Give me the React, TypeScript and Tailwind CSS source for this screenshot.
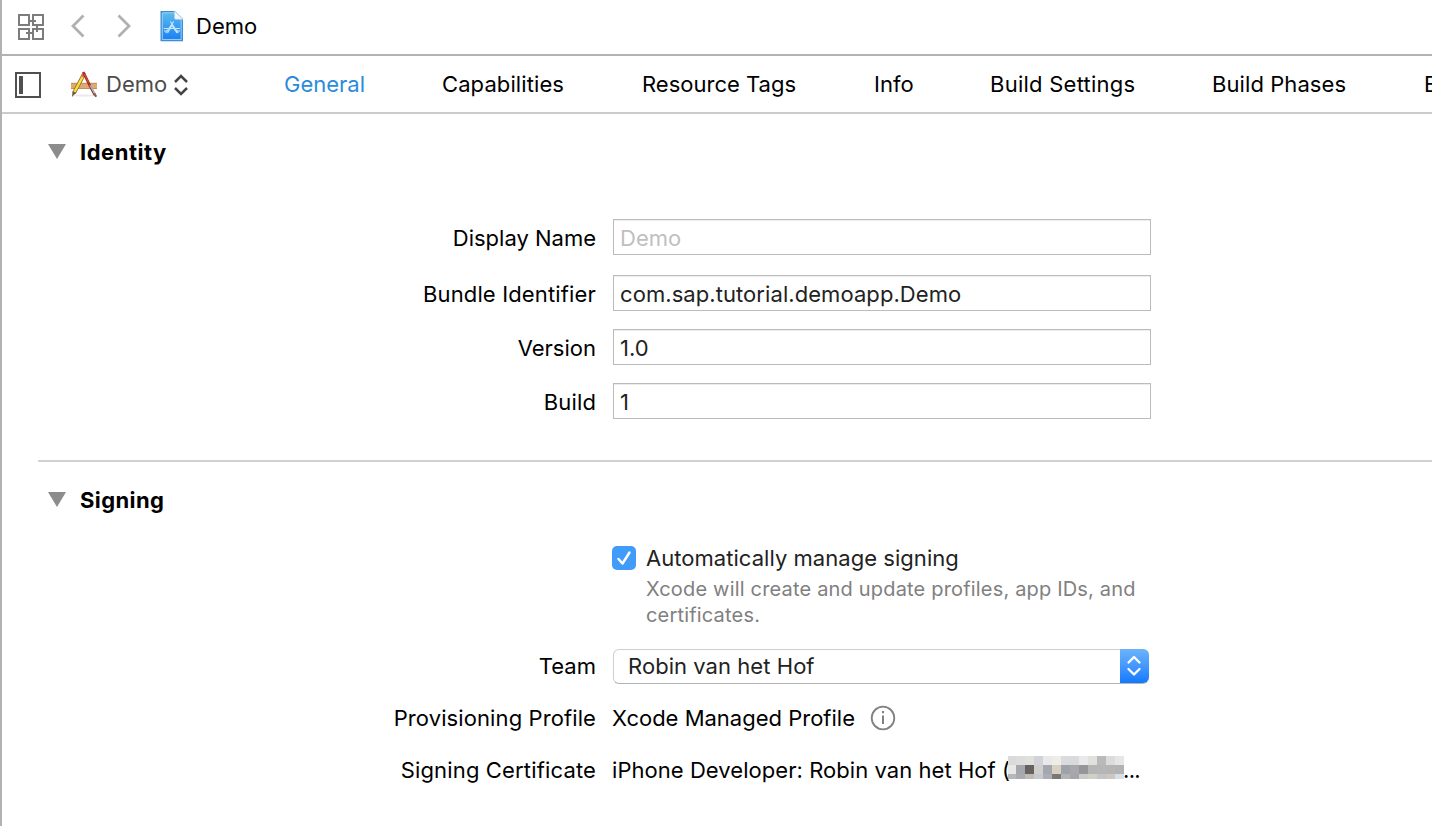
import type { ReactNode } from "react";

const MOSAIC = [
  ["#dadada", "#dcdddc", "#e0e0dd", "#d2d3d8", "#e9e9e9", "#eeede8", "#dadbdd", "#d9dadc", "#e9e9e9", "#e0e0dc", "#bababd", "#dcdcdc", "#e6e6e6"],
  ["#e8e8e7", "#a4a7ae", "#67625f", "#d0cfcc", "#a4a7ae", "#d8d0c3", "#9fa2ab", "#a6a8ac", "#969698", "#b5b5b5", "#b6b6b6", "#b5b5b5", "#b3b3b4"],
  ["#b7b7b5", "#a8abaf", "#bfbab6", "#c6cacd", "#acaeb4", "#7b7774", "#b3b3b1", "#a5a6aa", "#cacaca", "#d0cfc8", "#c4c4c7", "#cdc7c1", "#d8dfe6"],
];

function GridIcon() {
  return (
    <svg className="shrink-0" width="26" height="26" viewBox="0 0 26 26" fill="none" stroke="#7c7c7c" strokeWidth="2">
      <rect x="1" y="1" width="10" height="10" />
      <rect x="15" y="1" width="10" height="10" />
      <rect x="1" y="15" width="10" height="10" />
      <rect x="15" y="15" width="10" height="10" />
      <path d="M12 7h6M8 19h6M19 12v6" />
    </svg>
  );
}

function Chevron({ d }: { d: string }) {
  return (
    <svg width="14" height="24" viewBox="0 0 14 24" fill="none" stroke="#b0b0b0" strokeWidth="2.8">
      <path d={d} />
    </svg>
  );
}

function ProjectIcon() {
  return (
    <svg width="24" height="32" viewBox="0 0 24 32">
      <defs>
        <linearGradient id="doc" x1="0" y1="0" x2="0" y2="1">
          <stop offset="0" stopColor="#5bbcec" />
          <stop offset="1" stopColor="#1b80f6" />
        </linearGradient>
      </defs>
      <path d="M.5 1h14.500l8 8v22.300H.5z" fill="#3a8fd0" />
      <path d="M2.300 2.800h12.200l6.700 6.700v20H2.300z" fill="url(#doc)" stroke="#b5dcf8" strokeWidth=".8" />
      <path d="M14.500 1l8.500 8.300h-7q-1.500 0-1.500-1.500z" fill="#f2f6f9" stroke="#b9d2e4" strokeWidth=".6" />
      <path d="M3.800 18.500h4.200M9.500 18.500h5M16 18.500h4M4 21h3M17 21h3" stroke="#c9e8ff" strokeWidth="1" fill="none" />
      <path d="M10.300 11.500l8 11.500M13.700 11.500l-8 11.500M12 15.500l5 7.500M12 15.500L7.500 23" stroke="#c9e8ff" strokeWidth="1.100" fill="none" />
    </svg>
  );
}

function AppIcon() {
  return (
    <svg width="28" height="28" viewBox="0 0 28 28">
      <ellipse cx="14" cy="25.500" rx="11" ry="1.200" fill="#ebebeb" />
      <path d="M1 13h26v6H1z" fill="#e0a875" />
      <path d="M1 13.300h26M1 18.500h26" stroke="#c68c5c" strokeWidth="1" />
      <path d="M13.500 5L4 23" stroke="#8c6a26" strokeWidth="3.800" />
      <path d="M12.800 6.500L4.500 22" stroke="#f9e13d" strokeWidth="2.400" />
      <path d="M14.300 3l-2 4" stroke="#e8626a" strokeWidth="3.200" />
      <path d="M5.800 23L2 27l.5-5.500z" fill="#6b5a48" />
      <path d="M13.300 2l6.700 14" stroke="#a83420" strokeWidth="2.800" />
      <path d="M14.500 4l4 8.500" stroke="#d4583c" strokeWidth=".8" />
      <path d="M20 15.500l5 9.500" stroke="#b0a9a8" strokeWidth="2.600" />
      <path d="M19.200 16l5 9.500" stroke="#7d3a30" strokeWidth="1" />
      <path d="M24.300 23.500l1.900 3.300" stroke="#8a5a50" strokeWidth="2.200" />
    </svg>
  );
}

function Triangle() {
  return (
    <svg className="-mt-[2px]" width="18" height="15" viewBox="0 0 18 15">
      <path d="M0 0h18L9 15z" fill="#8c8c8c" />
    </svg>
  );
}

function Section({ title, children }: { title: ReactNode; children: ReactNode }) {
  return (
    <section className="flex flex-col">
      <div className="flex h-8 items-center gap-[14px] pl-[46px]">
        <Triangle />
        {title}
      </div>
      {children}
    </section>
  );
}

function Row({ label, children }: { label: ReactNode; children: ReactNode }) {
  return (
    <div className="flex h-9 items-center">
      <div className="flex w-[594px] justify-end pt-[2px]">{label}</div>
      <div className="flex pl-[17px]">{children}</div>
    </div>
  );
}

function Field({ children }: { children: ReactNode }) {
  return (
    <div className="flex h-9 w-[538px] items-center border border-[#bcbcbc] pt-[2px] pl-[6px] text-[#222] shadow-[inset_0_1px_0_#ededed]">
      {children}
    </div>
  );
}

export default function App() {
  return (
    <div className="h-[826px] w-[1432px] overflow-hidden border-l-2 border-[#b2b2b2] bg-white font-['Inter',sans-serif] text-[22px] leading-[26px] whitespace-nowrap text-black">
      <header className="flex h-14 items-center border-b-2 border-[#b2b2b2] pl-4">
        <GridIcon />
        <div className="-mt-[2px] ml-[27px] flex">
          <Chevron d="M12.500 1.500L2 12l10.500 10.500" />
        </div>
        <div className="-mt-[2px] ml-[32px] flex">
          <Chevron d="M1.500 1.500L12 12 1.500 22.500" />
        </div>
        <div className="-mt-[2px] ml-[29px] flex">
          <ProjectIcon />
        </div>
        <span className="-mt-[2px] ml-[12px]">Demo</span>
      </header>

      <nav className="flex h-[58px] items-center border-b-2 border-[#cbcbcb] pl-[13px]">
        <svg className="mt-px shrink-0" width="26" height="26" viewBox="0 0 26 26">
          <rect x="1" y="1" width="24" height="24" fill="none" stroke="#505050" strokeWidth="2" />
          <path d="M4 4h4v18H4z" fill="#505050" />
        </svg>
        <div className="ml-[29px] flex shrink-0">
          <AppIcon />
        </div>
        <div className="flex w-[186px] shrink-0 items-center pl-[8px] text-[#4c4c4c]">
          <span>Demo</span>
          <svg className="mt-[2px] ml-[7px]" width="14" height="22" viewBox="0 0 14 22" fill="none" stroke="#444" strokeWidth="2.500">
            <path d="M1 8l6-6 6 6M1 14l6 6 6-6" />
          </svg>
        </div>
        <div className="flex w-[158px] shrink-0 text-[#2a8bdc]"><span>General</span></div>
        <div className="flex w-[200px] shrink-0 tracking-[0.1px]"><span>Capabilities</span></div>
        <div className="flex w-[232px] shrink-0"><span>Resource Tags</span></div>
        <div className="flex w-[116px] shrink-0"><span>Info</span></div>
        <div className="flex w-[222px] shrink-0 tracking-[0.25px]"><span>Build Settings</span></div>
        <div className="flex w-[212px] shrink-0 tracking-[0.08px]"><span>Build Phases</span></div>
        <span>Build Rules</span>
      </nav>

      <main className="flex flex-col pt-[22px]">
        <Section title={<span className="font-bold tracking-[0.52px]">Identity</span>}>
          <div className="flex flex-col gap-[18px] pt-[51px]">
            <div className="pb-[2px]">
              <Row label={<span>Display Name</span>}><Field><span className="text-[#bfbfbf]">Demo</span></Field></Row>
            </div>
            <Row label={<span className="tracking-[0.15px]">Bundle Identifier</span>}><Field><span className="tracking-[0.07px]">com.sap.tutorial.demoapp.Demo</span></Field></Row>
            <Row label={<span>Version</span>}><Field><span>1.0</span></Field></Row>
            <Row label={<span className="tracking-[0.15px]">Build</span>}><Field><span>1</span></Field></Row>
          </div>
        </Section>
        <div className="mt-[41px] mb-[22px] ml-9 h-[2px] bg-[#d2d2d2]" />
        <Section title={<span className="font-bold tracking-[0.4px]">Signing</span>}>
          <div className="flex pt-[29px] pl-[610px]">
            <div className="mt-px flex h-6 w-6 items-center justify-center rounded-[5px] bg-[#419bf9]">
              <svg width="18" height="18" viewBox="0 0 18 18" fill="none" stroke="#fff" strokeWidth="2.500" strokeLinecap="round" strokeLinejoin="round">
                <path d="M3.500 10l4 4.500L14.500 3.500" />
              </svg>
            </div>
            <div className="flex flex-col items-start pl-[10px]">
              <span className="tracking-[0.04px] text-[#222]">Automatically manage signing</span>
              <div className="flex flex-col items-start pt-[5px] text-[20px] tracking-[0.18px] text-[#808080]">
                <span>Xcode will create and update profiles, app IDs, and</span>
                <span>certificates.</span>
              </div>
            </div>
          </div>
          <div className="flex flex-col gap-4 pt-[19px]">
            <Row label={<span>Team</span>}>
              <div className="mt-[2px] flex h-[35px] w-[536px] items-center justify-between rounded-[6px] border border-[#cfcfcf] border-b-[#b4b4b4] pl-[14px] text-[#222]">
                <span className="-mt-px tracking-[0.05px]">Robin van het Hof</span>
                <div className="-my-px -mr-px flex h-[34px] w-[29px] items-center justify-center rounded-r-[6px] bg-gradient-to-b from-[#6cb3fa] to-[#1079fe]">
                  <svg className="-ml-px" width="16" height="22" viewBox="0 0 16 22" fill="none" stroke="#fff" strokeWidth="2.300" strokeLinecap="round" strokeLinejoin="round">
                    <path d="M2.500 7.500L8 2l5.500 5.500M2.500 14L8 19.500l5.500-5.500" />
                  </svg>
                </div>
              </div>
            </Row>
            <Row label={<span className="tracking-[0.1px]">Provisioning Profile</span>}>
              <div className="-ml-px flex items-center pt-[2px]">
                <div className="w-[258px]"><span>Xcode Managed Profile</span></div>
                <svg width="26" height="26" viewBox="0 0 26 26" fill="none" stroke="#808080" strokeWidth="1.800">
                  <circle cx="13" cy="13" r="11.300" />
                  <path d="M13 10.500V19M13 6v2.200" strokeWidth="2" />
                </svg>
              </div>
            </Row>
            <Row label={<span className="tracking-[0.15px]">Signing Certificate</span>}>
              <div className="-ml-px flex items-center pt-[2px]">
                <div className="w-[396px]"><span className="tracking-[0.05px]">iPhone Developer: Robin van het Hof (</span></div>
                <div className="-mt-[6px] grid h-[23px] w-[116px] grid-cols-[8px_repeat(12,9px)] grid-rows-[9px_9px_5px]">
                  {MOSAIC.flat().map((c, i) => (
                    <div key={i} style={{ backgroundColor: c }} />
                  ))}
                </div>
                <span className="-ml-px tracking-[-0.7px]">...</span>
              </div>
            </Row>
          </div>
        </Section>
      </main>
    </div>
  );
}
